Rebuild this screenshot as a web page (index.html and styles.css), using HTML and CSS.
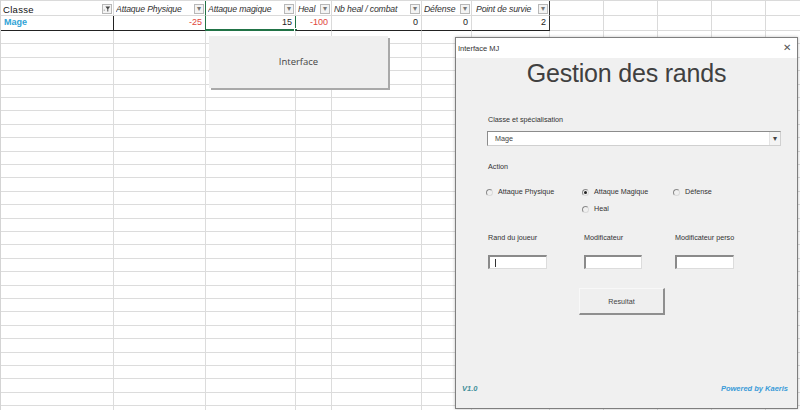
FILE: index.html
```html
<!DOCTYPE html>
<html lang="fr">
<head>
<meta charset="utf-8">
<title>Gestion des rands</title>
<link rel="stylesheet" href="styles.css">
</head>
<body>
<div class="sheet">
  <div class="row head">
    <div class="cell c1 plain"><span class="htxt">Classe</span><span class="flt on"><svg viewBox="0 0 10 10" width="8" height="8"><path d="M1 6h1v1H1z" fill="#444"/><path d="M3 2h6L6.6 5v3H5.4V5z" fill="#444"/></svg></span></div>
    <div class="cell c2"><span class="htxt">Attaque Physique</span><span class="flt">▾</span></div>
    <div class="cell c3 active-col"><span class="htxt">Attaque magique</span><span class="flt">▾</span></div>
    <div class="cell c4"><span class="htxt">Heal</span><span class="flt">▾</span></div>
    <div class="cell c5"><span class="htxt">Nb heal / combat</span><span class="flt">▾</span></div>
    <div class="cell c6"><span class="htxt">Défense</span><span class="flt">▾</span></div>
    <div class="cell c7"><span class="htxt">Point de survie</span><span class="flt">▾</span></div>
    <div class="cell c8"></div>
    <div class="cell c9"></div>
    <div class="cell c10"></div>
    <div class="cell c11"></div>
    <div class="cell c12"></div>
  </div>
  <div class="row data">
    <div class="cell c1 name">Mage</div>
    <div class="cell c2 num neg">-25</div>
    <div class="cell c3 num active">15<span class="handle"></span></div>
    <div class="cell c4 num neg">-100</div>
    <div class="cell c5 num">0</div>
    <div class="cell c6 num">0</div>
    <div class="cell c7 num last">2</div>
    <div class="cell c8 out"></div>
    <div class="cell c9 out"></div>
    <div class="cell c10 out"></div>
    <div class="cell c11 out"></div>
    <div class="cell c12 out"></div>
  </div>
  <div class="row filler">
    <div class="cell c1"></div>
    <div class="cell c2"></div>
    <div class="cell c3"></div>
    <div class="cell c4"></div>
    <div class="cell c5"></div>
    <div class="cell c6"></div>
    <div class="cell c7"></div>
    <div class="cell c8"></div>
    <div class="cell c9"></div>
    <div class="cell c10"></div>
    <div class="cell c11"></div>
    <div class="cell c12"></div>
  </div>
</div>

<button class="sheet-btn">Interface</button>

<div class="dialog">
  <div class="titlebar">
    <span class="wtitle">Interface MJ</span>
    <span class="close">✕</span>
  </div>
  <div class="dbody">
    <h1 class="heading">Gestion des rands</h1>
    <div class="lbl first">Classe et spécialisation</div>
    <div class="combo"><span class="combo-val">Mage</span><span class="combo-arrow">▾</span></div>
    <div class="lbl action">Action</div>
    <div class="radios">
      <label class="radio"><span class="dot"></span>Attaque Physique</label>
      <label class="radio"><span class="dot checked"></span>Attaque Magique</label>
      <label class="radio"><span class="dot"></span>Défense</label>
      <span></span>
      <label class="radio"><span class="dot"></span>Heal</label>
    </div>
    <div class="fields">
      <div class="lbl">Rand du joueur</div>
      <div class="lbl">Modificateur</div>
      <div class="lbl">Modificateur perso</div>
      <div class="tbox"><span class="caret"></span></div>
      <div class="tbox"></div>
      <div class="tbox"></div>
    </div>
    <div class="btnrow"><button class="win-btn">Resultat</button></div>
    <div class="footer">
      <span class="ver">V1.0</span>
      <span class="powered">Powered by Kaeris</span>
    </div>
  </div>
</div>
</body>
</html>
```

FILE: styles.css
```css
* { box-sizing: border-box; }
html, body { margin: 0; padding: 0; }
body {
  width: 800px;
  height: 410px;
  overflow: hidden;
  background: #fff;
  font-family: "Liberation Sans", Arial, sans-serif;
  position: relative;
}

/* ---------- spreadsheet ---------- */
.sheet {
  display: flex;
  flex-direction: column;
  height: 410px;
  border-left: 1px solid #d4d4d4;
}
.row { display: flex; }
.cell {
  flex: none;
  border-right: 1px solid #dadada;
  border-bottom: 1px solid #dadada;
  position: relative;
  font-size: 9px;
  color: #222;
  white-space: nowrap;
}
.c1 { width: 113px; }
.c2 { width: 92px; }
.c3 { width: 90px; }
.c4 { width: 36px; }
.c5 { width: 90px; }
.c6 { width: 50px; }
.c7 { width: 78px; }
.c8, .c9, .c10, .c11 { width: 54px; }
.c12 { width: 40px; }

.head { height: 16px; border-top: 1px solid #dadada; }
.head .cell {
  display: flex;
  align-items: flex-start;
  font-style: italic;
  font-size: 8.7px;
  letter-spacing: -0.15px;
  color: #333;
  padding: 3px 1px 0 2px;
  line-height: 11px;
}
.htxt { flex: 1; min-width: 0; overflow: hidden; }
.head .cell.plain { font-style: normal; color: #111; font-size: 9.5px; letter-spacing: 0.3px; }
.head .c7 { border-right-color: #333; padding-left: 4px; }
.flt {
  flex: none;
  width: 10px;
  height: 10px;
  border: 1px solid #b8b8b8;
  background: #f4f4f4;
  font-style: normal;
  font-size: 8px;
  line-height: 8px;
  color: #777;
  display: flex;
  align-items: center;
  justify-content: center;
}
.head .active-col { border-left: 1px solid #217346; margin-left: -1px; width: 91px; }

.data { height: 15px; }
.data .cell {
  line-height: 13px;
  border-bottom: 1px solid #222;
}
.data .out { border-bottom-color: #dadada; }
.data .c1 { border-right-color: #222; }
.data .last { border-right-color: #333; }
.name { color: #2fa3d6; font-weight: bold; padding-left: 3px; }
.num { text-align: right; padding-right: 3px; }
.neg { color: #e0453b; }
.active {
  border-left: 1px solid #217346;
  margin-left: -1px;
  width: 91px;
  border-bottom: 2px solid #217346 !important;
  border-right-color: #217346 !important;
}
.handle {
  position: absolute;
  right: -3px;
  bottom: -3px;
  width: 4px;
  height: 4px;
  background: #217346;
  border: 1px solid #fff;
}

.filler {
  flex: 1;
  background: repeating-linear-gradient(to bottom, transparent 0 12.4px, #dcdcdc 12.4px 13.4px);
}
.filler .cell { border-bottom: none; border-right-color: #dcdcdc; }

/* ---------- sheet button ---------- */
.sheet-btn {
  position: absolute;
  left: 209px;
  top: 36px;
  width: 179px;
  height: 52px;
  margin: 0;
  padding: 0 0 2px 0;
  background: #efefef;
  border: none;
  box-shadow: 2px 2px 0 #a9a9a9;
  font-family: "Open Sans", "Liberation Sans", sans-serif;
  font-size: 9.5px;
  color: #444;
}

/* ---------- dialog ---------- */
.dialog {
  position: absolute;
  left: 455px;
  top: 37px;
  width: 343px;
  height: 372px;
  border: 1px solid #7f7f7f;
  background: #f0f0f0;
  box-shadow: 0 0 3px rgba(0,0,0,0.25);
  display: flex;
  flex-direction: column;
  font-family: "Liberation Sans", Arial, sans-serif;
  color: #333;
}
.titlebar {
  height: 20px;
  background: #fff;
  display: flex;
  align-items: center;
  justify-content: space-between;
  padding: 0 6px 0 2px;
  flex: none;
}
.wtitle { font-size: 7.5px; color: #333; }
.close { font-size: 10px; color: #555; line-height: 10px; }

.dbody {
  flex: 1;
  padding: 0 15px 0 32px;
  display: flex;
  flex-direction: column;
}
.heading {
  margin: 0 0 0 -32px;
  width: 341px;
  text-align: center;
  font-weight: normal;
  font-size: 25px;
  line-height: 30px;
  color: #404040;
  letter-spacing: -0.2px;
}
.lbl { font-size: 7.2px; line-height: 10px; color: #333; }
.lbl.first { margin-top: 27px; }
.combo {
  margin-top: 6px;
  margin-left: -1px;
  width: 294px;
  height: 15px;
  background: #fff;
  border: 1px solid #8c8c8c;
  border-right-color: #d0d0d0;
  border-bottom-color: #d0d0d0;
  display: flex;
  align-items: center;
  justify-content: space-between;
  font-size: 7.2px;
  color: #444;
}
.combo-val { padding-left: 7px; }
.combo-arrow {
  width: 11px;
  height: 13px;
  border-left: 1px solid #e4e4e4;
  background: #f4f4f4;
  font-size: 8px;
  line-height: 13px;
  text-align: center;
  color: #444;
}
.lbl.action { margin-top: 16px; }

.radios {
  margin-top: 15px;
  display: grid;
  grid-template-columns: 96px 91px 1fr;
  row-gap: 7px;
}
.radio {
  display: flex;
  align-items: center;
  font-size: 7.2px;
  line-height: 10px;
  color: #333;
}
.dot {
  width: 7px;
  height: 7px;
  border-radius: 50%;
  border: 1px solid #8a8a8a;
  border-right-color: #dadada;
  border-bottom-color: #dadada;
  margin-left: -2px;
  margin-right: 5px;
  display: flex;
  align-items: center;
  justify-content: center;
  flex: none;
}
.dot.checked::after {
  content: "";
  width: 3px;
  height: 3px;
  border-radius: 50%;
  background: #222;
}

.fields {
  margin-top: 19px;
  display: grid;
  grid-template-columns: 96px 91px 1fr;
  row-gap: 12px;
}
.tbox {
  width: 59px;
  height: 14px;
  background: #fff;
  border: 1px solid #dcdcdc;
  border-top: 2px solid #8a8a8a;
  border-left: 2px solid #8a8a8a;
  position: relative;
}
.fields .tbox:nth-child(5) { width: 58px; }
.caret {
  position: absolute;
  left: 5px;
  top: 2px;
  width: 1px;
  height: 8px;
  background: #333;
}
.btnrow { margin-top: 19px; padding-left: 91px; }
.win-btn {
  width: 86px;
  height: 27px;
  margin: 0;
  padding: 0;
  background: #efefef;
  border: 1px solid #f8f8f8;
  border-right: 2px solid #8f8f8f;
  border-bottom: 2px solid #8f8f8f;
  font-family: "Liberation Sans", Arial, sans-serif;
  font-size: 7.2px;
  color: #444;
}
.footer {
  margin-top: auto;
  margin-left: -26px;
  margin-right: -6px;
  margin-bottom: 15px;
  display: flex;
  justify-content: space-between;
  font-size: 7.5px;
  font-weight: bold;
  font-style: italic;
}
.ver { color: #3f8f9a; }
.powered { color: #3a9bd8; }
```
